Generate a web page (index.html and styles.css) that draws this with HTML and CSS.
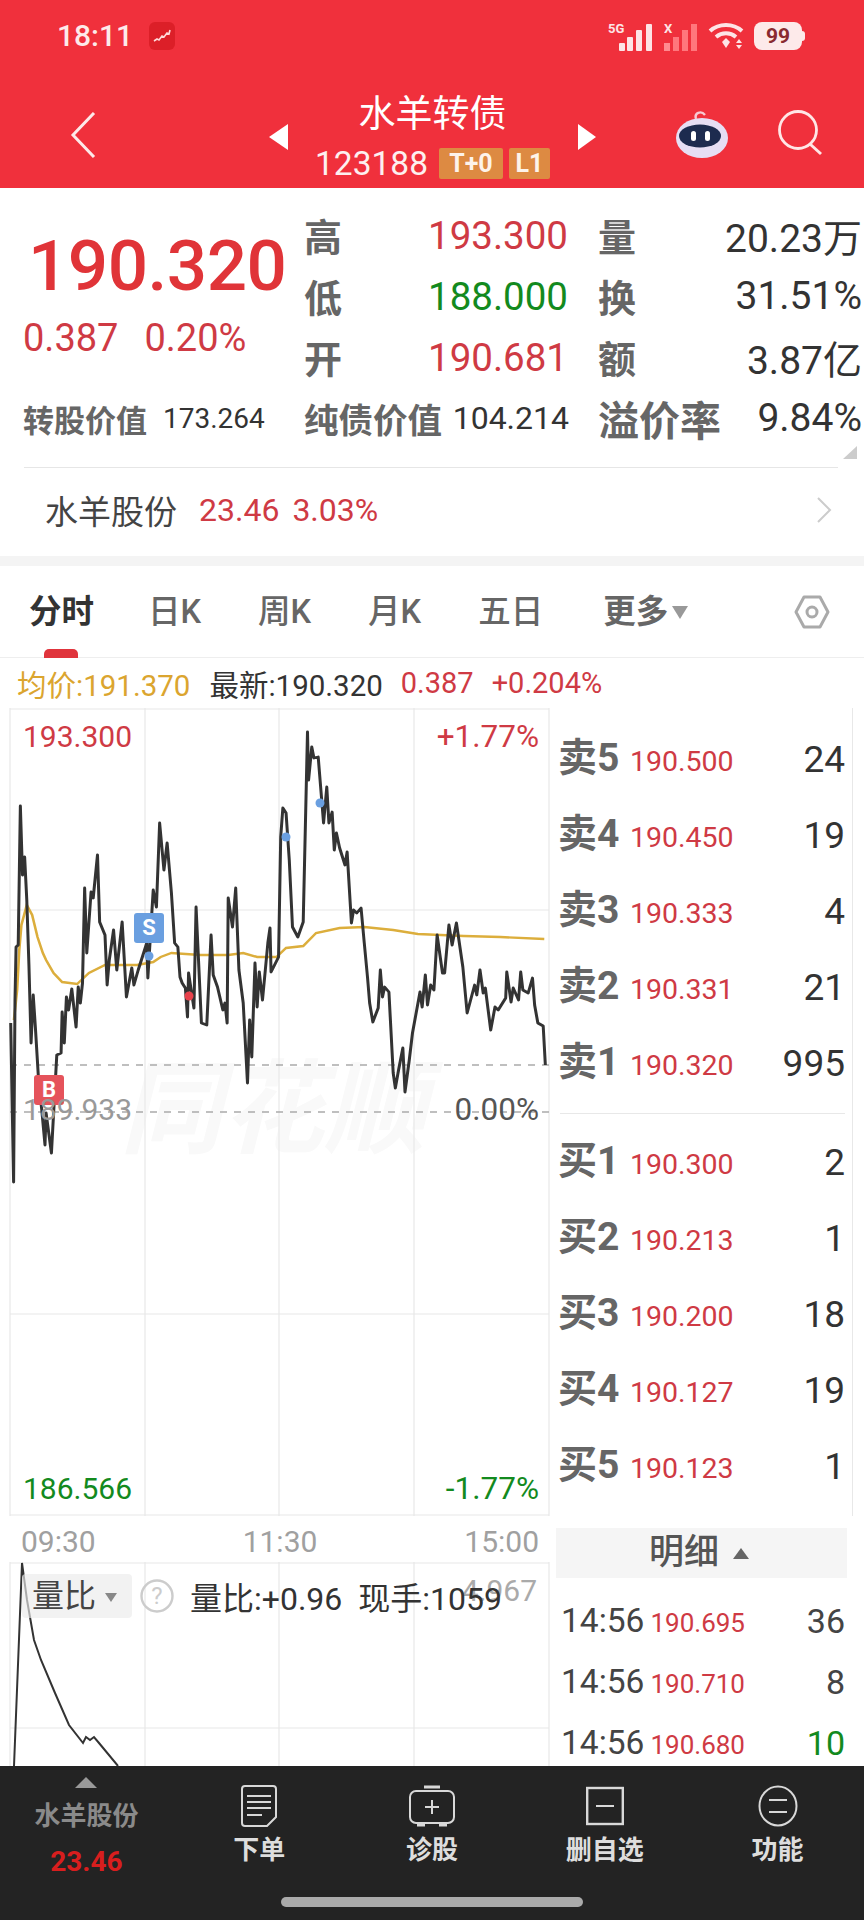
FILE: index.html
```html
<!DOCTYPE html>
<html lang="zh">
<head>
<meta charset="utf-8">
<title>水羊转债</title>
<link rel="stylesheet" href="styles.css">
</head>
<body>
<div class="page">
  <header class="header">
    <div class="status">
      <div class="status-left">
        <span class="clock">18:11</span>
        <span class="app-badge">
          <svg width="18" height="14" viewBox="0 0 18 14"><polyline points="1,12 4,10 6,11 9,7 11,8 14,4 16,5 17,1" fill="none" stroke="#ffd9d9" stroke-width="1.6"/></svg>
        </span>
      </div>
      <div class="status-right">
        <svg class="signal" width="46" height="30" viewBox="0 0 46 30">
          <text x="0" y="11" class="sig-text">5G</text>
          <rect x="11" y="21" width="6" height="8" rx="1" fill="#fde4e6"/>
          <rect x="19" y="15" width="6" height="14" rx="1" fill="#fde4e6"/>
          <rect x="28" y="8" width="6" height="21" rx="1" fill="#fde4e6"/>
          <rect x="38" y="2" width="6" height="27" rx="1" fill="#fde4e6"/>
        </svg>
        <svg class="signal" width="34" height="30" viewBox="0 0 34 30">
          <text x="0" y="11" class="sig-text">X</text>
          <rect x="0" y="21" width="6" height="8" fill="#ff8a8f"/>
          <rect x="9" y="15" width="6" height="14" fill="#ff777d"/>
          <rect x="18" y="8" width="6" height="21" fill="#ff777d"/>
          <rect x="27" y="2" width="6" height="27" fill="#ff777d"/>
        </svg>
        <svg width="36" height="28" viewBox="0 0 36 28">
          <path d="M2 9C11 1 25 1 34 9" fill="none" stroke="#fde4e6" stroke-width="4"/>
          <path d="M8 15C14 10 22 10 28 15" fill="none" stroke="#fde4e6" stroke-width="4"/>
          <path d="M14 20L18 16L22 20L18 26Z" fill="#fde4e6"/>
          <path d="M31 17L34 21H28ZM31 27L34 23H28Z" fill="#fde4e6"/>
        </svg>
        <span class="battery"><span class="battery-num">99</span></span>
      </div>
    </div>
    <nav class="nav">
      <svg class="back" width="26" height="46" viewBox="0 0 26 46"><polyline points="24,1 3,23 24,45" fill="none" stroke="#fde9e9" stroke-width="3"/></svg>
      <div class="nav-center">
        <span class="tri-left"></span>
        <div class="nav-stack">
          <div class="nav-title">水羊转债</div>
          <div class="nav-code">
            <span class="code">123188</span>
            <span class="tag tag-t">T+0</span>
            <span class="tag tag-l">L1</span>
          </div>
        </div>
        <span class="tri-right"></span>
      </div>
      <div class="nav-icons">
        <svg width="52" height="48" viewBox="0 0 52 48">
          <path d="M20 9C18 3 25 0 29 5" fill="none" stroke="#f7c9d2" stroke-width="2.4"/>
          <ellipse cx="26" cy="28" rx="26" ry="20" fill="#e6def4"/>
          <ellipse cx="24" cy="26" rx="21" ry="11.5" fill="#1d2b4f"/>
          <rect x="15" y="21" width="5" height="10" rx="2.5" fill="#fff"/>
          <rect x="29" y="21" width="5" height="10" rx="2.5" fill="#fff"/>
        </svg>
        <svg width="46" height="46" viewBox="0 0 46 46">
          <circle cx="20" cy="20" r="18.5" fill="none" stroke="#ffe6e6" stroke-width="2.8"/>
          <line x1="32" y1="34" x2="43" y2="44" stroke="#ffe6e6" stroke-width="3"/>
        </svg>
      </div>
    </nav>
  </header>

  <section class="quote">
    <div class="big-cell">
      <div class="big-price">190.320</div>
      <div class="big-change"><span>0.387</span><span>0.20%</span></div>
    </div>
    <div class="q-cell"><span class="q-label">高</span><span class="q-val up">193.300</span></div>
    <div class="q-cell"><span class="q-label">量</span><span class="q-val">20.23万</span></div>
    <div class="q-cell"><span class="q-label">低</span><span class="q-val down">188.000</span></div>
    <div class="q-cell"><span class="q-label">换</span><span class="q-val">31.51%</span></div>
    <div class="q-cell"><span class="q-label">开</span><span class="q-val up">190.681</span></div>
    <div class="q-cell"><span class="q-label">额</span><span class="q-val">3.87亿</span></div>
    <div class="q-foot q-foot-a"><span class="foot-l1">转股价值</span><span class="foot-v1">173.264</span></div>
    <div class="q-foot"><span class="foot-l2">纯债价值</span><span class="foot-v2">104.214</span></div>
    <div class="q-foot"><span class="foot-l3">溢价率</span><span class="q-val">9.84%</span></div>
    <span class="corner"></span>
  </section>

  <a class="stock-row">
    <span class="stock-name">水羊股份</span>
    <span class="stock-num">23.46</span>
    <span class="stock-num">3.03%</span>
    <svg class="stock-arrow" width="16" height="26" viewBox="0 0 16 26"><polyline points="2,1 14,13 2,25" fill="none" stroke="#ccc" stroke-width="2"/></svg>
  </a>
  <div class="band"></div>

  <div class="tabs">
    <span class="tab tab-on">分时</span>
    <span class="tab">日K</span>
    <span class="tab">周K</span>
    <span class="tab">月K</span>
    <span class="tab">五日</span>
    <span class="tab tab-more">更多<i class="more-tri"></i></span>
    <svg class="hex" width="36" height="34" viewBox="0 0 36 34">
      <path d="M10 2H26L34 17L26 32H10L2 17Z" fill="none" stroke="#aaa" stroke-width="3" stroke-linejoin="round"/>
      <circle cx="18" cy="17" r="5" fill="none" stroke="#aaa" stroke-width="3"/>
    </svg>
  </div>

  <div class="legend">
    <span class="lg-avg">均价:191.370</span>
    <span class="lg-new">最新:190.320</span>
    <span class="lg-up">0.387</span>
    <span class="lg-up">+0.204%</span>
  </div>

  <main class="market">
    <div class="charts">
      <div class="chart">
        <div class="watermark">同花顺</div>
        <svg class="chart-svg" width="560" height="808" viewBox="0 708 560 808">
          <g stroke="#e8e8e8" stroke-width="1.2">
            <line x1="10" y1="708" x2="10" y2="1516"/><line x1="145" y1="708" x2="145" y2="1516"/>
            <line x1="279" y1="708" x2="279" y2="1516"/><line x1="414" y1="708" x2="414" y2="1516"/>
            <line x1="549" y1="708" x2="549" y2="1516"/>
            <line x1="10" y1="709" x2="549" y2="709"/><line x1="10" y1="910" x2="549" y2="910"/>
            <line x1="10" y1="1314" x2="549" y2="1314"/><line x1="10" y1="1515" x2="549" y2="1515"/>
          </g>
          <g stroke="#aaa" stroke-width="1.4" stroke-dasharray="7 7">
            <line x1="10" y1="1065" x2="549" y2="1065"/>
            <line x1="10" y1="1112" x2="549" y2="1112"/>
          </g>
          <g transform="scale(1.0714 1)">
            <polyline fill="none" stroke="#dcae3c" stroke-width="2.4" points="13,1020 16,990 18,950 20,925 25,905 30,915 35,937 40,953 43,960 50,973 58,982 72,984 83,973 98,965 128,965 143,962 150,957 160,953 187,955 213,955 227,953 240,957 258,957 267,948 283,946 295,933 317,928 340,927 367,930 390,934 433,936 467,937 508,939"/>
            <polyline fill="none" stroke="#333" stroke-width="2.8" stroke-linejoin="round" points="10,1023 12.7,1182 14,1000 15,947 17,945 19,806 21,875 23,857 25,900 27,965 29,1043 31,995 33,1027 36,1080 39,1110 42,1145 43,1113 48,1153 53,1055 57,1053 58,1012 60,1043 62,997 64,1010 67,989 71,1027 73,987 75,1003 77,983 79,888 81,953 85,892 87,898 91,855 93,922 98,935 100,985 102,960 106,930 109,970 114,922 118,997 123,968 125,985 129,970 137,943 138,978 143,890 146,907 149,823 153,870 156,843 160,893 163,943 166,947 168,977 170,983 173,988 175,1017 176,973 181,1008 183,907 188,1023 193,1025 197,935 199,975 203,987 208,1010 210,1003 212,1023 213,898 217,927 220,888 223,970 227,1003 231,1083 233,1020 235,1057 238,963 240,1007 242,972 245,1000 250,943 252,928 253,972 260,957 262,837 264,808 267,813 270,860 273,927 278,937 283,922 287,732 288,780 291,747 293,758 297,757 302,823 305,787 307,823 310,812 312,850 314,833 317,848 322,865 324,852 328,923 330,910 333,913 337,908 340,943 343,977 345,1003 348,1022 353,1008 355,970 357,997 359,987 363,992 367,1073 369,1088 372,1070 376,1048 378,1092 382,1060 385,1033 392,992 394,1007 397,975 399,1005 402,985 405,990 408,935 413,973 415,973 419,925 422,945 426,923 432,967 436,1013 443,985 445,995 448,970 451,993 453,988 458,1030 462,1007 465,1010 472,998 473,972 477,1002 479,988 484,1000 486,972 488,990 493,993 497,978 499,1005 502,1023 507,1026 509,1065"/>
          </g>
          <circle cx="286" cy="837" r="4.5" fill="#6a9fe0"/>
          <circle cx="320" cy="803" r="4.5" fill="#6a9fe0"/>
          <circle cx="149" cy="956" r="4.5" fill="#6a9fe0"/>
          <circle cx="189" cy="996" r="4.5" fill="#e8424c"/>
        </svg>
        <span class="marker marker-s">S</span>
        <span class="marker marker-b">B</span>
        <span class="c-label c-tl up">193.300</span>
        <span class="c-label c-pct c-tr up">+1.77%</span>
        <span class="c-label c-ml mid">189.933</span>
        <span class="c-label c-pct c-mr zero">0.00%</span>
        <span class="c-label c-bl down">186.566</span>
        <span class="c-label c-pct c-br down">-1.77%</span>
      </div>
      <div class="times"><span>09:30</span><span>11:30</span><span>15:00</span></div>
      <div class="volume">
        <svg class="chart-svg" width="560" height="204" viewBox="0 1562 560 204">
          <g stroke="#e8e8e8" stroke-width="1.2">
            <line x1="10" y1="1562" x2="10" y2="1766"/><line x1="145" y1="1562" x2="145" y2="1766"/>
            <line x1="279" y1="1562" x2="279" y2="1766"/><line x1="414" y1="1562" x2="414" y2="1766"/>
            <line x1="549" y1="1562" x2="549" y2="1766"/>
            <line x1="10" y1="1563" x2="549" y2="1563"/><line x1="10" y1="1728" x2="549" y2="1728"/>
          </g>
          <polyline fill="none" stroke="#333" stroke-width="2" points="14,1766 22,1563 27,1600 34,1640 41,1660 55,1693 69,1725 83,1743 86,1737 90,1740 94,1737 99,1743 118,1766"/>
        </svg>
        <span class="v-max">4.967</span>
        <div class="v-tools">
          <span class="v-select">量比<i class="v-tri"></i></span>
          <svg class="v-help" width="34" height="34" viewBox="0 0 34 34">
            <circle cx="17" cy="17" r="15.5" fill="none" stroke="#ccc" stroke-width="2.4"/>
            <text x="17" y="25" class="help-text">?</text>
          </svg>
          <span class="v-text">量比:+0.96</span>
          <span class="v-text">现手:1059</span>
        </div>
      </div>
    </div>

    <aside class="side">
      <div class="book">
        <div class="row"><span class="row-l">卖5</span><span class="row-p">190.500</span><span class="row-q">24</span></div>
        <div class="row"><span class="row-l">卖4</span><span class="row-p">190.450</span><span class="row-q">19</span></div>
        <div class="row"><span class="row-l">卖3</span><span class="row-p">190.333</span><span class="row-q">4</span></div>
        <div class="row"><span class="row-l">卖2</span><span class="row-p">190.331</span><span class="row-q">21</span></div>
        <div class="row"><span class="row-l">卖1</span><span class="row-p">190.320</span><span class="row-q">995</span></div>
        <div class="book-line"></div>
        <div class="row"><span class="row-l">买1</span><span class="row-p">190.300</span><span class="row-q">2</span></div>
        <div class="row"><span class="row-l">买2</span><span class="row-p">190.213</span><span class="row-q">1</span></div>
        <div class="row"><span class="row-l">买3</span><span class="row-p">190.200</span><span class="row-q">18</span></div>
        <div class="row"><span class="row-l">买4</span><span class="row-p">190.127</span><span class="row-q">19</span></div>
        <div class="row"><span class="row-l">买5</span><span class="row-p">190.123</span><span class="row-q">1</span></div>
      </div>
      <div class="detail-head">明细<i class="detail-tri"></i></div>
      <div class="detail">
        <div class="d-row"><span class="d-t">14:56</span><span class="d-p">190.695</span><span class="d-q">36</span></div>
        <div class="d-row"><span class="d-t">14:56</span><span class="d-p">190.710</span><span class="d-q">8</span></div>
        <div class="d-row"><span class="d-t">14:56</span><span class="d-p">190.680</span><span class="d-q down">10</span></div>
      </div>
    </aside>
  </main>

  <footer class="bar">
    <div class="bar-grid">
      <div class="bar-item bar-stock">
        <i class="bar-tri"></i>
        <span class="bar-name">水羊股份</span>
        <span class="bar-price">23.46</span>
      </div>
      <div class="bar-item">
        <svg class="bar-icon" width="38" height="42" viewBox="0 0 38 42">
          <path d="M5 1H33a3 3 0 0 1 3 3V32L27 41H5a3 3 0 0 1-3-3V4a3 3 0 0 1 3-3Z" fill="none" stroke="#d8d8d8" stroke-width="2"/>
          <path d="M7 11H31M7 17H31M7 23H31M7 30H22" stroke="#d8d8d8" stroke-width="2"/>
        </svg>
        <span class="bar-label">下单</span>
      </div>
      <div class="bar-item">
        <svg class="bar-icon" width="46" height="42" viewBox="0 0 46 42">
          <rect x="1" y="6" width="44" height="32" rx="6" fill="none" stroke="#d8d8d8" stroke-width="2"/>
          <path d="M15 2H31" stroke="#d8d8d8" stroke-width="3"/>
          <path d="M8 40H16M30 40H38" stroke="#d8d8d8" stroke-width="3"/>
          <path d="M23 15V29M16 22H30" stroke="#d8d8d8" stroke-width="2"/>
        </svg>
        <span class="bar-label">诊股</span>
      </div>
      <div class="bar-item">
        <svg class="bar-icon" width="38" height="42" viewBox="0 0 38 42">
          <rect x="1.2" y="3" width="35.6" height="36" fill="none" stroke="#d8d8d8" stroke-width="2.4"/>
          <path d="M10 21H28" stroke="#d8d8d8" stroke-width="2"/>
        </svg>
        <span class="bar-label">删自选</span>
      </div>
      <div class="bar-item">
        <svg class="bar-icon" width="40" height="42" viewBox="0 0 40 42">
          <ellipse cx="20" cy="21" rx="18.5" ry="19.5" fill="none" stroke="#d8d8d8" stroke-width="2"/>
          <path d="M11 15H29M11 27H29" stroke="#d8d8d8" stroke-width="2"/>
        </svg>
        <span class="bar-label">功能</span>
      </div>
    </div>
    <div class="home"></div>
  </footer>
</div>
</body>
</html>
```

FILE: styles.css
```css
* { box-sizing: border-box; }
html, body { margin: 0; padding: 0; background: #fff; }
body { font-family: Roboto, "Noto Sans CJK SC", sans-serif; color: #333; }
i { font-style: normal; display: inline-block; }
.page { width: 864px; height: 1920px; display: flex; flex-direction: column; overflow: hidden; }

.up { color: #cf3a44; }
.down { color: #138a1e; }

/* header */
.header { height: 188px; background: #f0303c; color: #fff; flex: none; }
.status { height: 74px; display: flex; justify-content: space-between; align-items: flex-start; padding: 20px 62px 0 57px; }
.status-left { display: flex; align-items: center; gap: 16px; }
.clock { font-size: 30px; font-weight: 500; line-height: 32px; color: #fdeaea; }
.app-badge { width: 26px; height: 28px; border-radius: 6px; background: #dc1f28; display: flex; align-items: center; justify-content: center; }
.status-right { display: flex; align-items: flex-start; gap: 10px; padding-top: 2px; }
.sig-text { font: 700 13px Roboto, sans-serif; fill: #fde4e6; }
.battery { position: relative; width: 48px; height: 28px; border-radius: 8px; background: #fdeaea; display: flex; align-items: center; justify-content: center; }
.battery::after { content: ""; position: absolute; right: -3px; top: 9px; width: 3px; height: 10px; border-radius: 0 3px 3px 0; background: #fdeaea; }
.battery-num { font-size: 21px; font-weight: 700; color: #8a2a30; }

.nav { height: 114px; display: grid; grid-template-columns: 1fr auto 1fr; align-items: start; padding: 0 40px; }
.back { margin: 38px 0 0 30px; }
.nav-center { display: flex; align-items: center; gap: 28px; padding-top: 17px; }
.tri-left { width: 0; height: 0; border: 13px solid transparent; border-left-width: 0; border-right: 19px solid #fff; }
.tri-right { width: 0; height: 0; border: 13px solid transparent; border-right-width: 0; border-left: 18px solid #fff; }
.nav-stack { display: flex; flex-direction: column; align-items: center; width: 234px; }
.nav-title { font-size: 37px; line-height: 48px; color: #fff; }
.nav-code { display: flex; align-items: center; gap: 6px; height: 38px; margin-top: 5px; }
.code { font-size: 33.5px; margin-right: 5px; color: #fdf0f0; }
.tag { height: 31px; line-height: 31px; border-radius: 2px; background: #dd8a42; color: #fdf3ea; font-size: 25px; font-weight: 700; text-align: center; }
.tag-t { width: 64px; }
.tag-l { width: 41px; }
.nav-icons { display: flex; justify-content: flex-end; align-items: flex-start; gap: 50px; padding-top: 36px; }

/* quote */
.quote { position: relative; flex: none; display: grid; grid-template-columns: 281px 294px 264px; grid-template-rows: 61px 61px 61px 62px; padding: 16px 2px 0 23px; height: 279px; }
.big-cell { grid-row: 1 / span 3; padding-top: 16px; }
.big-price { font-size: 71px; line-height: 92px; font-weight: 500; color: #e03438; margin-left: 5px; letter-spacing: -0.5px; }
.big-change { display: flex; gap: 26px; font-size: 38px; line-height: 42px; color: #cf3a44; margin-top: 5px; }
.q-cell { display: flex; justify-content: space-between; align-items: center; }
.q-cell:nth-child(even) { padding-right: 30px; }
.q-cell:nth-child(odd) { padding-right: 0; }
.q-label { font-size: 38px; font-weight: 700; color: #666; }
.q-val { font-size: 39px; color: #333; white-space: nowrap; }
.q-val.up, .q-val.down { font-size: 38.5px; padding-top: 2px; }
.q-val.up { color: #cf3a44; }
.q-val.down { color: #138a1e; }
.q-foot { display: flex; justify-content: space-between; align-items: center; padding-right: 29px; }
.q-foot:nth-of-type(10) { padding-right: 0; }
.q-foot-a { justify-content: flex-start; gap: 16px; padding: 0; }
.foot-l1 { font-size: 31px; font-weight: 700; color: #666; white-space: nowrap; }
.foot-v1 { font-size: 28px; }
.foot-l2 { font-size: 34.5px; font-weight: 700; color: #666; white-space: nowrap; }
.foot-v2 { font-size: 32px; }
.foot-l3 { font-size: 41px; font-weight: 700; color: #666; white-space: nowrap; }
.corner { position: absolute; right: 7px; bottom: 8px; width: 14px; height: 13px; background: #ccc; clip-path: polygon(100% 0, 100% 100%, 0 100%); }

.stock-row { flex: none; height: 89px; margin: 0 26px 0 24px; border-top: 1px solid #e6e6e6; display: flex; align-items: center; padding: 0 6px 5px 21px; gap: 13px; }
.stock-name { font-size: 33px; color: #444; margin-right: 9px; }
.stock-num { font-size: 32px; color: #cf3a44; }
.stock-arrow { margin-left: auto; }
.band { flex: none; height: 10px; background: #f4f4f4; }

/* tabs */
.tabs { flex: none; height: 92px; display: flex; align-items: center; gap: 57px; padding: 0 34px 0 29px; border-bottom: 1px solid #eee; }
.tab { position: relative; font-size: 32.5px; line-height: 44px; font-weight: 500; color: #666; white-space: nowrap; }
.tab-on { font-weight: 700; color: #333; margin-right: -3px; }
.tab-on::after { content: ""; position: absolute; left: 15px; bottom: -24px; width: 34px; height: 9px; border-radius: 5px 5px 0 0; background: #e0343c; }
.tab-more { margin-left: 3px; font-weight: 700; }
.more-tri { width: 0; height: 0; margin-left: 4px; border: 8px solid transparent; border-bottom-width: 0; border-top: 13px solid #999; vertical-align: 4px; }
.hex { margin-left: auto; }

.legend { flex: none; height: 50px; display: flex; align-items: center; gap: 18px; padding-left: 17px; white-space: nowrap; font-size: 29px; }
.lg-avg { font-size: 29.5px; color: #dba52f; margin-right: 1px; }
.lg-new { font-size: 29.5px; color: #333; }
.lg-up { color: #cf3a44; }

/* market */
.market { flex: 1; min-height: 0; display: flex; overflow: hidden; }
.charts { width: 560px; flex: none; }
.chart { position: relative; height: 808px; }
.chart-svg { position: absolute; left: 0; top: 0; display: block; }
.watermark { position: absolute; left: 120px; top: 345px; font-size: 102px; line-height: 115px; font-weight: 700; font-style: italic; color: #f9f9f9; white-space: nowrap; }
.marker { position: absolute; width: 30px; height: 30px; border-radius: 3px; color: #fff; font-size: 22px; font-weight: 700; line-height: 30px; text-align: center; }
.marker-s { left: 134px; top: 205px; background: #6a9fe0; }
.marker-b { left: 34px; top: 367px; background: #e5535b; }
.c-label { position: absolute; font-size: 30px; line-height: 34px; }
.c-pct { font-size: 31.5px; }
.c-tl { left: 23px; top: 12px; }
.c-tr { right: 21px; top: 12px; }
.c-ml { left: 23px; top: 385px; color: #999; }
.c-mr { right: 21px; top: 385px; }
.zero { color: #555; }
.c-bl { left: 23px; top: 764px; }
.c-br { right: 21px; top: 764px; }

.times { height: 46px; display: flex; justify-content: space-between; align-items: center; padding: 4px 21px 0 21px; font-size: 30px; color: #a0a0a0; }
.volume { position: relative; height: 204px; }
.v-max { position: absolute; right: 23px; top: 12px; font-size: 30px; line-height: 34px; color: #aaa; }
.v-tools { position: absolute; left: 22px; top: 11px; display: flex; align-items: center; gap: 8px; white-space: nowrap; }
.v-select { width: 110px; height: 44px; padding-left: 10px; border-radius: 4px; background: rgba(235,235,235,0.65); font-size: 32px; line-height: 44px; color: #444; }
.v-tri { width: 0; height: 0; margin-left: 9px; border: 6px solid transparent; border-bottom-width: 0; border-top: 9px solid #888; vertical-align: 5px; }
.help-text { font: 400 24px Roboto, sans-serif; fill: #ccc; text-anchor: middle; }
.v-help { flex: none; }
.v-text { font-size: 32px; color: #333; margin-left: 8px; }
.v-text + .v-text { margin-left: 8px; }

/* side */
.side { flex: 1; min-width: 0; }
.book { height: 808px; padding: 13px 7px 0 0; border-right: 1px solid #e8e8e8; margin-right: 11px; }
.row { height: 76px; display: flex; align-items: center; white-space: nowrap; margin-left: -2px; }
.row-l { width: 71px; flex: none; font-size: 39px; line-height: 52px; font-weight: 700; color: #666; padding-bottom: 3px; }
.row-p { font-size: 28.5px; color: #cf3a44; padding-top: 5px; margin-left: 1px; }
.row-q { margin-left: auto; font-size: 37px; color: #333; }
.book-line { height: 1px; background: #e8e8e8; margin: 12px 0 10px; }
.detail-head { height: 50px; margin: 12px 17px 0 -4px; background: #f5f5f5; display: flex; align-items: center; justify-content: center; font-size: 35px; line-height: 46px; font-weight: 500; color: #555; gap: 14px; padding: 0 5px 0 0; }
.detail-tri { width: 0; height: 0; border: 8px solid transparent; border-top-width: 0; border-bottom: 11px solid #666; }
.detail { padding: 12px 19px 0 1px; }
.d-row { height: 61px; display: flex; align-items: center; white-space: nowrap; }
.d-t { font-size: 33.5px; color: #444; }
.d-p { font-size: 26px; color: #cf3a44; margin-left: 6px; padding-top: 5px; }
.d-q { margin-left: auto; font-size: 34px; color: #444; }
.d-q.down { color: #138a1e; }

/* bottom bar */
.bar { flex: none; height: 154px; background: #232323; }
.bar-grid { height: 131px; display: grid; grid-template-columns: repeat(5, 1fr); }
.bar-item { display: flex; flex-direction: column; align-items: center; padding-top: 19px; }
.bar-icon { flex: none; display: block; }
.bar-label { margin-top: 6px; font-size: 26px; line-height: 34px; font-weight: 700; color: #ddd; white-space: nowrap; }
.bar-stock { padding-top: 11px; }
.bar-tri { width: 0; height: 0; border: 11px solid transparent; border-top-width: 0; border-bottom: 11px solid #999; }
.bar-name { margin-top: 11px; font-size: 26px; line-height: 34px; font-weight: 700; color: #8a8a8a; }
.bar-price { margin-top: 12px; font-size: 28px; line-height: 34px; font-weight: 700; color: #d81e1e; }
.home { width: 302px; height: 10px; margin: 0 auto; border-radius: 5px; background: #aaa; }
```
